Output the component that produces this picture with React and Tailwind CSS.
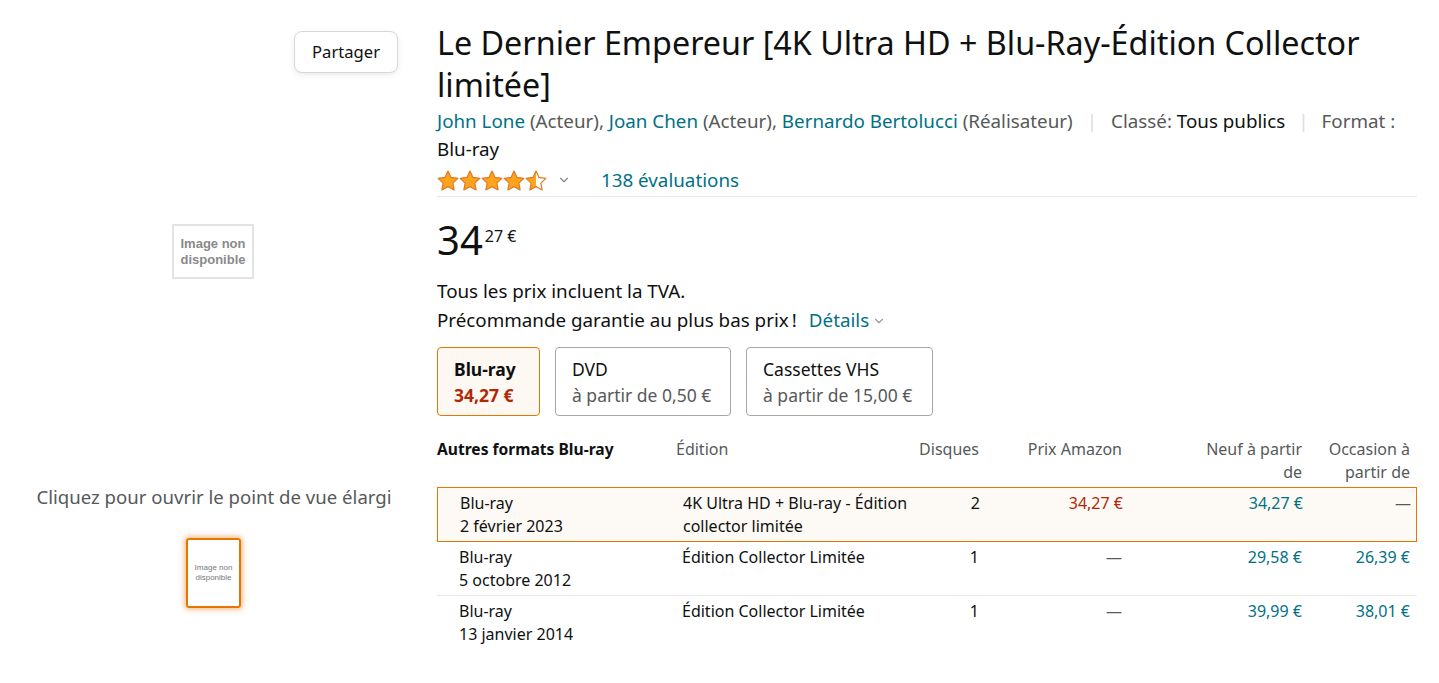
import { ChevronDown } from "lucide-react";

const font = { fontFamily: '"Noto Sans", "Open Sans", sans-serif' };

const Star = ({ fill = 1, id }) => (
  <svg width="22" height="21" viewBox="0 0 24 23">
    <defs>
      <linearGradient id={id}>
        <stop offset={`${fill * 100}%`} stopColor="#ffa41c" />
        <stop offset={`${fill * 100}%`} stopColor="#ffffff" />
      </linearGradient>
    </defs>
    <path
      d="M12 1.2l3.3 6.9 7.5 1-5.5 5.2 1.4 7.5L12 18.2l-6.7 3.6 1.4-7.5L1.2 9.1l7.5-1z"
      fill={`url(#${id})`}
      stroke="#de7921"
      strokeWidth="1.3"
      strokeLinejoin="round"
    />
  </svg>
);

const Placeholder = ({ small }) => (
  <div
    className={
      small
        ? "flex flex-col items-center justify-center text-[8px] leading-[10px] text-[#777] font-medium"
        : "flex flex-col items-center justify-center text-[13px] leading-[16px] text-[#8a8a8a] font-bold"
    }
    style={{ fontFamily: '"Liberation Sans", Arial, sans-serif' }}
  >
    <span>Image non</span>
    <span>disponible</span>
  </div>
);

const rows = [
  {
    format: "Blu-ray",
    date: "2 février 2023",
    edition: ["4K Ultra HD + Blu-ray - Édition", "collector limitée"],
    discs: "2",
    amazon: "34,27 €",
    neuf: "34,27 €",
    occasion: "—",
    active: true,
  },
  {
    format: "Blu-ray",
    date: "5 octobre 2012",
    edition: ["Édition Collector Limitée"],
    discs: "1",
    amazon: "—",
    neuf: "29,58 €",
    occasion: "26,39 €",
  },
  {
    format: "Blu-ray",
    date: "13 janvier 2014",
    edition: ["Édition Collector Limitée"],
    discs: "1",
    amazon: "—",
    neuf: "39,99 €",
    occasion: "38,01 €",
  },
];

const cols = "grid grid-cols-[239px_232px_71px_143px_180px_108px]";

export default function App() {
  return (
    <div className="min-h-screen bg-white flex text-[#0f1111]" style={font}>
      {/* left: images */}
      <div className="w-[420px] shrink-0 flex flex-col">
        <div className="flex justify-end pr-[22px] pt-[31px]">
          <button className="h-[42px] px-[17px] rounded-lg border border-[#d5d9d9] bg-white text-[16.6px] text-[#0f1111] shadow-[0_2px_5px_rgba(213,217,217,0.5)]">
            Partager
          </button>
        </div>
        <div className="flex justify-center pl-[6px] mt-[151px]">
          <div className="w-[82px] h-[55px] border-2 border-[#e3e3e3] flex items-center justify-center">
            <Placeholder />
          </div>
        </div>
        <p className="mt-[204px] text-center text-[18.6px] text-[#565959] pl-[8px]">
          Cliquez pour ouvrir le point de vue élargi
        </p>
        <div className="flex justify-center pl-[7px] mt-[27px]">
          <div className="w-[55px] h-[70px] rounded-[3px] border-2 border-[#e77600] shadow-[0_0_5px_2px_rgba(228,121,17,0.45)] flex items-center justify-center">
            <Placeholder small />
          </div>
        </div>
      </div>

      {/* right: details */}
      <div className="flex-1 pl-[17px] pr-[22px] pt-[21px]">
        <h1 className="text-[32.3px] leading-[42px] font-normal">
          Le Dernier Empereur [4K Ultra HD + Blu-Ray-Édition Collector limitée]
        </h1>
        <div className="text-[18.8px] leading-[28px] mt-[2px]">
          <a className="text-[#007185]">John Lone</a>
          <span className="text-[#565959]"> (Acteur), </span>
          <a className="text-[#007185]">Joan Chen</a>
          <span className="text-[#565959]"> (Acteur), </span>
          <a className="text-[#007185]">Bernardo Bertolucci</a>
          <span className="text-[#565959]"> (Réalisateur)</span>
          <span className="text-[#ddd] mx-[14px]">|</span>
          <span className="text-[#565959]">Classé: </span>
          <span>Tous publics</span>
          <span className="text-[#ddd] mx-[13px]">|</span>
          <span className="text-[#565959]">Format : </span>
          <span>Blu-ray</span>
        </div>
        <div className="flex items-center h-[34px] pt-[1px] border-b border-[#e7e7e7]">
          <div className="flex">
            {[1, 1, 1, 1, 0.5].map((f, i) => (
              <Star key={i} fill={f} id={`s${i}`} />
            ))}
          </div>
          <ChevronDown className="ml-[10px] text-[#888]" size={14} strokeWidth={2} />
          <a className="ml-[30px] text-[18.8px] text-[#007185]">138 évaluations</a>
        </div>

        <div className="flex items-start mt-[22px]">
          <span className="text-[40px] leading-[42px]">34</span>
          <span className="text-[16px] leading-[18px] mt-[8px] ml-[2px]">27 €</span>
        </div>

        <p className="text-[18.8px] leading-[29px] mt-[16px]">Tous les prix incluent la TVA.</p>
        <div className="flex items-center text-[18.8px] leading-[29px]">
          <span>Précommande garantie au plus bas prix&#8239;!</span>
          <a className="ml-[12px] text-[#007185]">Détails</a>
          <ChevronDown className="ml-[3px] text-[#999]" size={14} strokeWidth={2} />
        </div>

        <div className="flex gap-[15px] mt-[12px]">
          <div className="w-[103px] h-[69px] rounded-[4px] border border-[#e77600] bg-[#fef8f2] px-4 pt-[8px] text-[17.5px] leading-[26px]">
            <div className="font-bold">Blu-ray</div>
            <div className="font-bold text-[#b12704]">34,27 €</div>
          </div>
          <div className="w-[176px] h-[69px] rounded-[4px] border border-[#a6a6a6] px-4 pt-[8px] text-[17.5px] leading-[26px]">
            <div>DVD</div>
            <div className="text-[#565959]">à partir de 0,50 €</div>
          </div>
          <div className="w-[187px] h-[69px] rounded-[4px] border border-[#a6a6a6] px-4 pt-[8px] text-[17.5px] leading-[26px]">
            <div>Cassettes VHS</div>
            <div className="text-[#565959]">à partir de 15,00 €</div>
          </div>
        </div>

        {/* table */}
        <div className="mt-[20px] text-[16px] leading-[23px]">
          <div className={`${cols} h-[51px] pt-[2px] text-[#565959]`}>
            <div className="font-bold text-[#0f1111] text-[15.6px]">Autres formats Blu-ray</div>
            <div>Édition</div>
            <div className="text-right">Disques</div>
            <div className="text-right">Prix Amazon</div>
            <div className="text-right pl-[80px]">Neuf à partir de</div>
            <div className="text-right pl-[10px]">Occasion à partir de</div>
          </div>
          {rows.map((r, i) => (
            <div
              key={i}
              className={
                r.active
                  ? `${cols} h-[55px] pt-[4px] border border-[#e77600] bg-[#fdf9f4]`
                  : `${cols} h-[54px] pt-[4px] border-b border-[#e7e7e7] last:border-b-0`
              }
            >
              <div className="pl-[22px]">
                <div>{r.format}</div>
                <div>{r.date}</div>
              </div>
              <div className="pl-[6px]">
                {r.edition.map((e) => (
                  <div key={e}>{e}</div>
                ))}
              </div>
              <div className="text-right">{r.discs}</div>
              <div className={r.active ? "text-right text-[#b12704]" : "text-right text-[#565959]"}>
                {r.amazon}
              </div>
              <div className="text-right text-[#007185]">{r.neuf}</div>
              <div className={r.occasion === "—" ? "text-right text-[#565959]" : "text-right text-[#007185]"}>
                {r.occasion}
              </div>
            </div>
          ))}
        </div>
      </div>
    </div>
  );
}
